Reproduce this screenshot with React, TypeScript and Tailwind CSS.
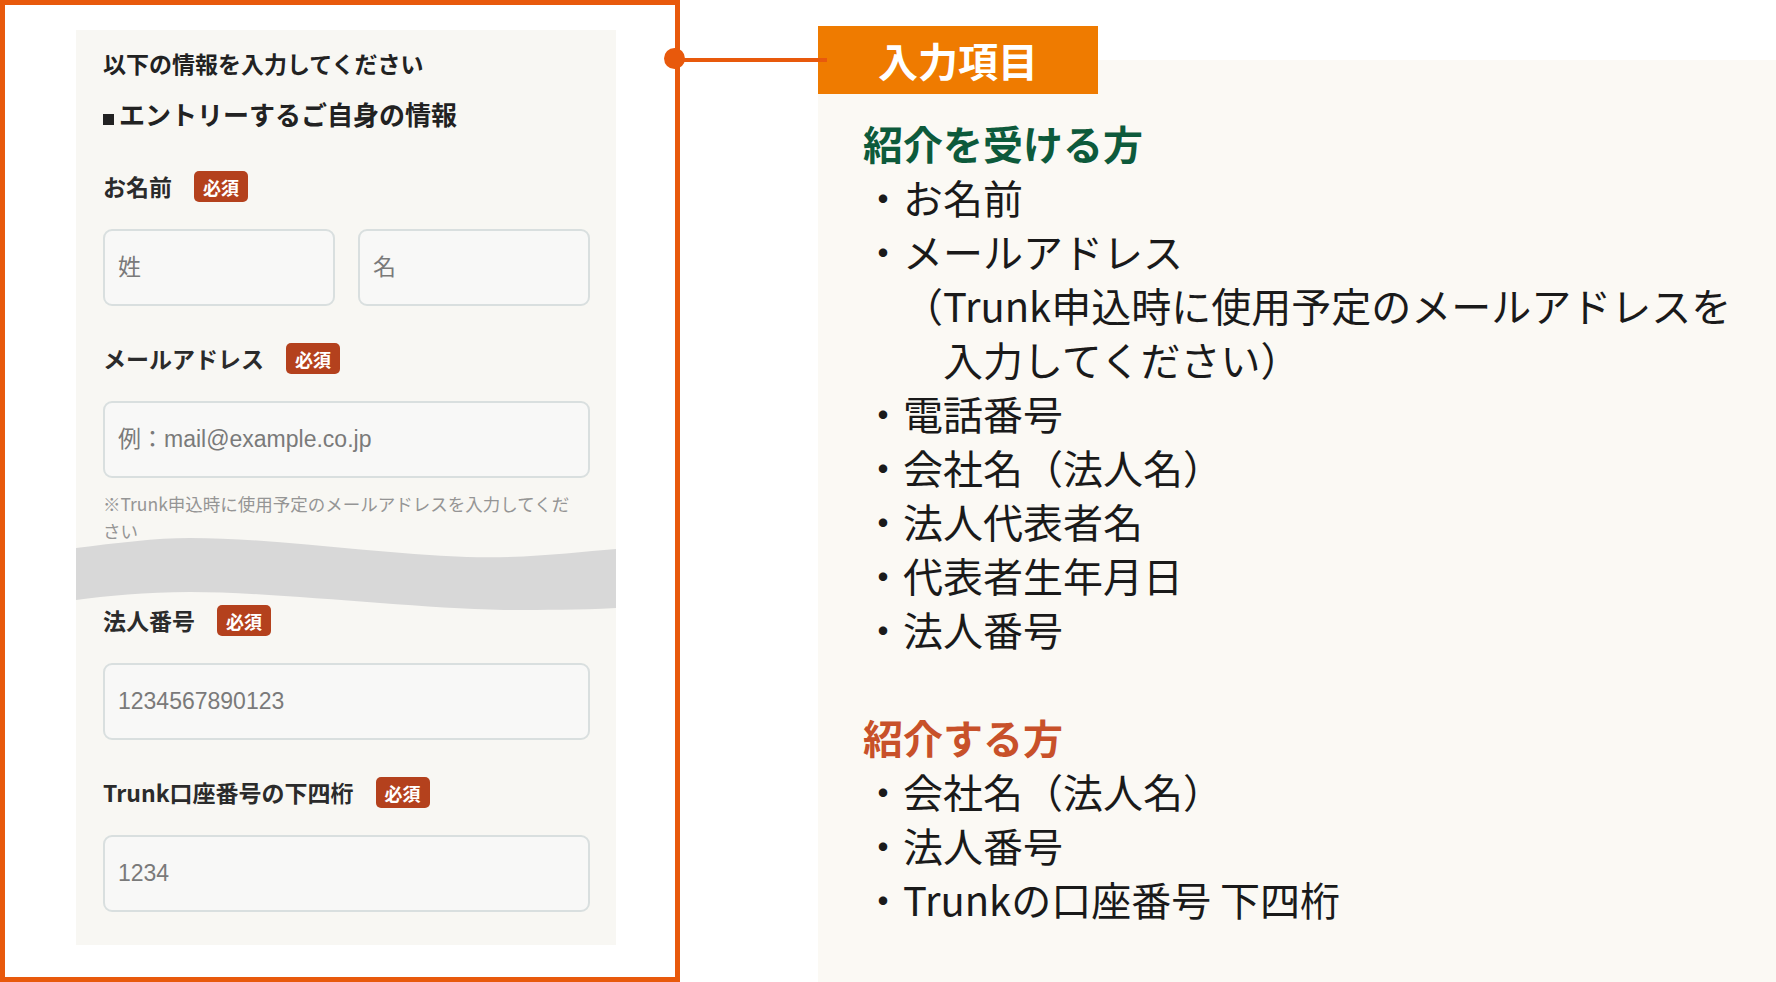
import React from 'react';

const Badge = () => (
  <span className="inline-flex h-[31px] w-[54px] items-center justify-center rounded-[5px] bg-[#b4411d] text-[18px] font-bold leading-none text-white">
    必須
  </span>
);

const FieldLabel = ({ label }: { label: string }) => (
  <div className="flex h-[31px] items-center gap-[22px]">
    <span className="text-[23px] font-bold leading-none text-[#2b2b2b]">{label}</span>
    <Badge />
  </div>
);

const TextBox = ({ placeholder, className = '' }: { placeholder: string; className?: string }) => (
  <input
    type="text"
    placeholder={placeholder}
    className={`h-[77px] rounded-[9px] border-2 border-[#d9dfdf] bg-[#f8f8f7] px-[13px] font-['Liberation_Sans','Noto_Sans_CJK_JP',sans-serif] text-[23px] text-[#333] outline-none placeholder:text-[#7a7a7a] ${className}`}
  />
);

const receiverItems = [
  '・お名前',
  '・メールアドレス',
];

const receiverItems2 = [
  '・電話番号',
  '・会社名（法人名）',
  '・法人代表者名',
  '・代表者生年月日',
  '・法人番号',
];

const referrerItems = [
  '・会社名（法人名）',
  '・法人番号',
  '・Trunkの口座番号 下四桁',
];

export default function App() {
  return (
    <div className="flex h-[982px] w-[1776px] overflow-hidden bg-white font-['Noto_Sans_CJK_JP','Noto_Sans',sans-serif]">
      {/* form screenshot in orange frame */}
      <div className="relative h-[982px] w-[680px] shrink-0 border-[5px] border-[#e8590c] bg-white pl-[71px] pt-[25px]">
        <div className="flex h-[915px] w-[540px] flex-col bg-[#f8f7f3] px-[27px] pt-[17px]">
          <p className="text-[23px] font-bold leading-[32px] text-[#222]">以下の情報を入力してください</p>
          <p className="mt-[17px] flex items-baseline text-[26px] font-bold leading-[36px] text-[#222]">
            <span className="mr-[5px] inline-block h-[11px] w-[11px] bg-[#222]" />
            エントリーするご自身の情報
          </p>

          <div className="mt-[39px]">
            <FieldLabel label="お名前" />
          </div>
          <div className="mt-[27px] flex gap-[23px]">
            <TextBox placeholder="姓" className="w-[232px]" />
            <TextBox placeholder="名" className="w-[232px]" />
          </div>

          <div className="mt-[37px]">
            <FieldLabel label="メールアドレス" />
          </div>
          <TextBox placeholder="例：mail@example.co.jp" className="mt-[27px] w-[487px]" />
          <p className="mt-[12px] whitespace-nowrap text-[17.5px] leading-[27px] text-[#959595]">
            ※Trunk申込時に使用予定のメールアドレスを入力してくだ
            <br />
            さい
          </p>

          {/* cut marker */}
          <svg
            className="-mx-[27px] -mt-[14px] block h-[75px] w-[540px] shrink-0 overflow-visible"
            viewBox="0 0 540 75"
            preserveAspectRatio="none"
          >
            <path
              d="M0,18 C40,13 80,8 114,8 C200,8 300,24 391,27 C450,29 500,22 540,19 L540,78 C500,80 470,80 428,80 C330,78 200,62 114,62 C70,62 30,66 0,70 Z"
              fill="#d8d8d8"
            />
          </svg>

          <div className="relative">
            <FieldLabel label="法人番号" />
          </div>
          <TextBox placeholder="1234567890123" className="mt-[27px] w-[487px]" />

          <div className="mt-[37px]">
            <FieldLabel label="Trunk口座番号の下四桁" />
          </div>
          <TextBox placeholder="1234" className="mt-[27px] w-[487px]" />
        </div>
        <div className="absolute left-[659px] top-[43px] h-[21px] w-[21px] rounded-full bg-[#e8590c]" />
      </div>

      {/* list of input items */}
      <div className="relative flex flex-1 flex-col pt-[60px]">
        <div className="absolute left-0 top-[58px] z-20 h-[4px] w-[147px] bg-[#e8590c]" />
        <div className="absolute left-[138px] top-[26px] z-10 flex h-[68px] w-[280px] items-center justify-center bg-[#ef7b00]">
          <span className="text-[40px] font-bold leading-none text-white">入力項目</span>
        </div>
        <div className="ml-[138px] flex-1 whitespace-nowrap bg-[#fbf9f4] pl-[45px] pt-[56px] text-[40px] leading-[54px] text-[#1a1a1a]">
          <p className="font-bold text-[#0d5a3b]">紹介を受ける方</p>
          {receiverItems.map((t) => (
            <p key={t}>{t}</p>
          ))}
          <p className="pl-[40px]">（Trunk申込時に使用予定のメールアドレスを</p>
          <p className="pl-[80px]">入力してください）</p>
          {receiverItems2.map((t) => (
            <p key={t}>{t}</p>
          ))}
          <div className="h-[54px]" />
          <p className="font-bold text-[#c8512a]">紹介する方</p>
          {referrerItems.map((t) => (
            <p key={t}>{t}</p>
          ))}
        </div>
      </div>
    </div>
  );
}
